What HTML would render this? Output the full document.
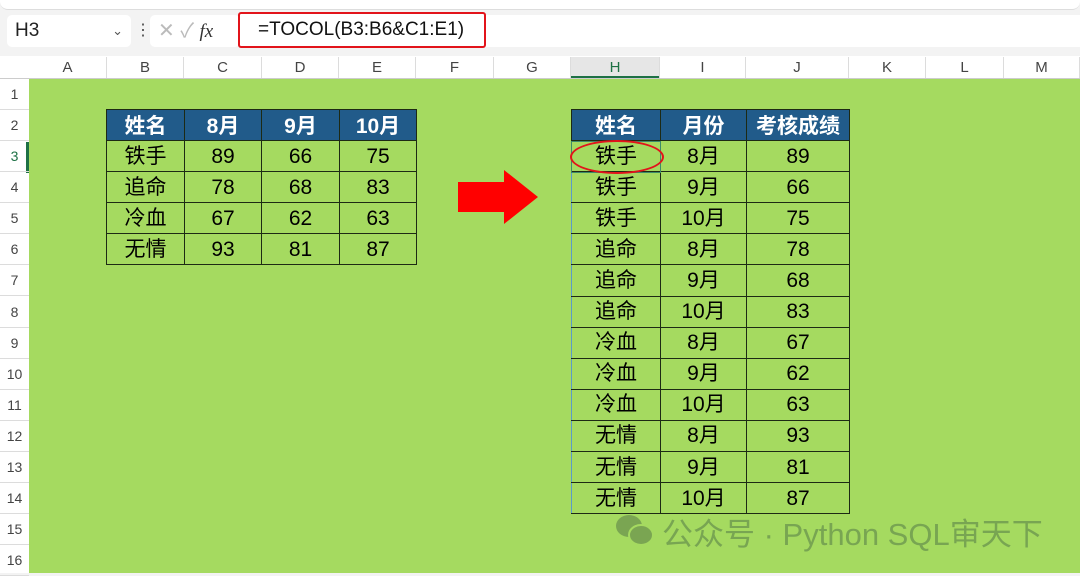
<!DOCTYPE html>
<html><head><meta charset="utf-8"><style>
*{margin:0;padding:0;box-sizing:border-box}
body{width:1080px;height:573px;overflow:hidden;background:#f3f3f3;font-family:"Liberation Sans","Noto Sans CJK SC",sans-serif;position:relative}
.a{position:absolute}
.ch{position:absolute;top:57px;height:21px;font-size:15px;color:#444;text-align:center;line-height:21px;border-right:1px solid #dcdcdc}
.rh{position:absolute;left:0;width:29px;font-size:14px;color:#444;text-align:center;border-bottom:1px solid #dcdcdc}
table{position:absolute;border-collapse:collapse;font-family:"Liberation Sans","Noto Sans CJK SC",sans-serif}
td{border:1.3px solid #1d2a14;text-align:center;font-size:21px;color:#000;padding:0;height:31.1px;line-height:29px}
th{background:#215b8a;color:#fff;font-size:21px;font-weight:bold;border:1.3px solid #1d2a14;height:31.1px;padding:0}
</style></head><body>
<div class="a" style="left:0;top:0;width:1080px;height:10px;background:#fff;border-bottom:1px solid #ddd;border-radius:0 0 8px 8px"></div>
<div class="a" style="left:7px;top:15px;width:124px;height:32px;background:#fff;border-radius:5px;font-size:19px;line-height:32px;padding-left:8px;color:#222">H3<span style="position:absolute;right:8px;font-size:13px;color:#555">&#8964;</span></div>
<div class="a" style="left:135px;top:20px;font-size:16px;color:#444">&#8942;</div>
<div class="a" style="left:150px;top:15px;width:90px;height:32px;background:#fff;border-radius:5px;font-size:20px;line-height:32px;color:#bbb;padding-left:8px">✕ ✓ <i style="color:#333;font-family:'Liberation Serif',serif;font-size:19px">fx</i></div>
<div class="a" style="left:244px;top:15px;width:836px;height:32px;background:#fff"></div>
<div class="a" style="left:238px;top:12px;width:248px;height:36px;border:2px solid #e2141b;border-radius:3px;background:#fff;font-size:19px;line-height:32px;padding-left:18px;color:#111">=TOCOL(B3:B6&amp;C1:E1)</div>
<div class="a" style="left:0;top:56px;width:1080px;height:23px;background:#fff;border-bottom:1px solid #ccc"></div>
<div class="a" style="left:0;top:79px;width:29px;height:494px;background:#fff"></div>
<div class="a" style="left:29px;top:79px;width:1051px;height:494px;background:#a5da60"></div>
<div class="a" style="left:571px;top:57px;width:89px;height:21px;background:#e6e6e6;border-bottom:2px solid #1e7145"></div>
<div class="a" style="left:26px;top:142px;width:3px;height:31px;background:#1e7145"></div>
<div class="ch" style="left:29px;width:78px">A</div><div class="ch" style="left:107px;width:77px">B</div><div class="ch" style="left:184px;width:78px">C</div><div class="ch" style="left:262px;width:77px">D</div><div class="ch" style="left:339px;width:77px">E</div><div class="ch" style="left:416px;width:78px">F</div><div class="ch" style="left:494px;width:77px">G</div><div class="ch" style="left:571px;width:89px;color:#1e7145">H</div><div class="ch" style="left:660px;width:86px">I</div><div class="ch" style="left:746px;width:103px">J</div><div class="ch" style="left:849px;width:77px">K</div><div class="ch" style="left:926px;width:78px">L</div><div class="ch" style="left:1004px;width:76px">M</div>
<div class="rh" style="top:79px;height:31px;line-height:31px">1</div><div class="rh" style="top:110px;height:31px;line-height:31px">2</div><div class="rh" style="top:141px;height:31px;line-height:31px;color:#1e7145">3</div><div class="rh" style="top:172px;height:31px;line-height:31px">4</div><div class="rh" style="top:203px;height:31px;line-height:31px">5</div><div class="rh" style="top:234px;height:31px;line-height:31px">6</div><div class="rh" style="top:265px;height:31px;line-height:31px">7</div><div class="rh" style="top:297px;height:31px;line-height:31px">8</div><div class="rh" style="top:328px;height:31px;line-height:31px">9</div><div class="rh" style="top:359px;height:31px;line-height:31px">10</div><div class="rh" style="top:390px;height:31px;line-height:31px">11</div><div class="rh" style="top:421px;height:31px;line-height:31px">12</div><div class="rh" style="top:452px;height:31px;line-height:31px">13</div><div class="rh" style="top:483px;height:31px;line-height:31px">14</div><div class="rh" style="top:514px;height:31px;line-height:31px">15</div><div class="rh" style="top:545px;height:31px;line-height:31px">16</div>
<table style="left:106px;top:109px;width:311px">
<tr><th style="width:78px">姓名</th><th style="width:77px">8月</th><th style="width:78px">9月</th><th>10月</th></tr>
<tr><td>铁手</td><td>89</td><td>66</td><td>75</td></tr>
<tr><td>追命</td><td>78</td><td>68</td><td>83</td></tr>
<tr><td>冷血</td><td>67</td><td>62</td><td>63</td></tr>
<tr><td>无情</td><td>93</td><td>81</td><td>87</td></tr>
</table>
<svg class="a" style="left:456px;top:168px" width="84" height="58"><polygon points="2,14 48,14 48,2 82,29 48,56 48,44 2,44" fill="#ff0000"/></svg>
<table style="left:571px;top:109px;width:279px">
<tr><th style="width:89px">姓名</th><th style="width:86px">月份</th><th>考核成绩</th></tr>
<tr><td style="border-left-color:#5a9bc9">铁手</td><td>8月</td><td>89</td></tr>
<tr><td style="border-left-color:#5a9bc9">铁手</td><td>9月</td><td>66</td></tr>
<tr><td style="border-left-color:#5a9bc9">铁手</td><td>10月</td><td>75</td></tr>
<tr><td style="border-left-color:#5a9bc9">追命</td><td>8月</td><td>78</td></tr>
<tr><td style="border-left-color:#5a9bc9">追命</td><td>9月</td><td>68</td></tr>
<tr><td style="border-left-color:#5a9bc9">追命</td><td>10月</td><td>83</td></tr>
<tr><td style="border-left-color:#5a9bc9">冷血</td><td>8月</td><td>67</td></tr>
<tr><td style="border-left-color:#5a9bc9">冷血</td><td>9月</td><td>62</td></tr>
<tr><td style="border-left-color:#5a9bc9">冷血</td><td>10月</td><td>63</td></tr>
<tr><td style="border-left-color:#5a9bc9">无情</td><td>8月</td><td>93</td></tr>
<tr><td style="border-left-color:#5a9bc9">无情</td><td>9月</td><td>81</td></tr>
<tr><td style="border-left-color:#5a9bc9">无情</td><td>10月</td><td>87</td></tr>
</table>
<div class="a" style="left:571px;top:141px;width:90px;height:32px;border:1.5px solid #3d8a6a"></div>
<div class="a" style="left:570px;top:140px;width:94px;height:34px;border:2px solid #e2141b;border-radius:50%"></div>
<svg class="a" style="left:614px;top:512px" width="42" height="36"><ellipse cx="15" cy="14" rx="13" ry="11" fill="#7aa552"/><ellipse cx="27" cy="23" rx="12" ry="10" fill="#7aa552" stroke="#a5da60" stroke-width="2"/></svg>
<div class="a" style="left:662px;top:509px;font-size:31px;color:#78a552;font-family:'Liberation Sans','Noto Sans CJK SC',sans-serif;white-space:nowrap">公众号 · Python SQL审天下</div>
</body></html>
